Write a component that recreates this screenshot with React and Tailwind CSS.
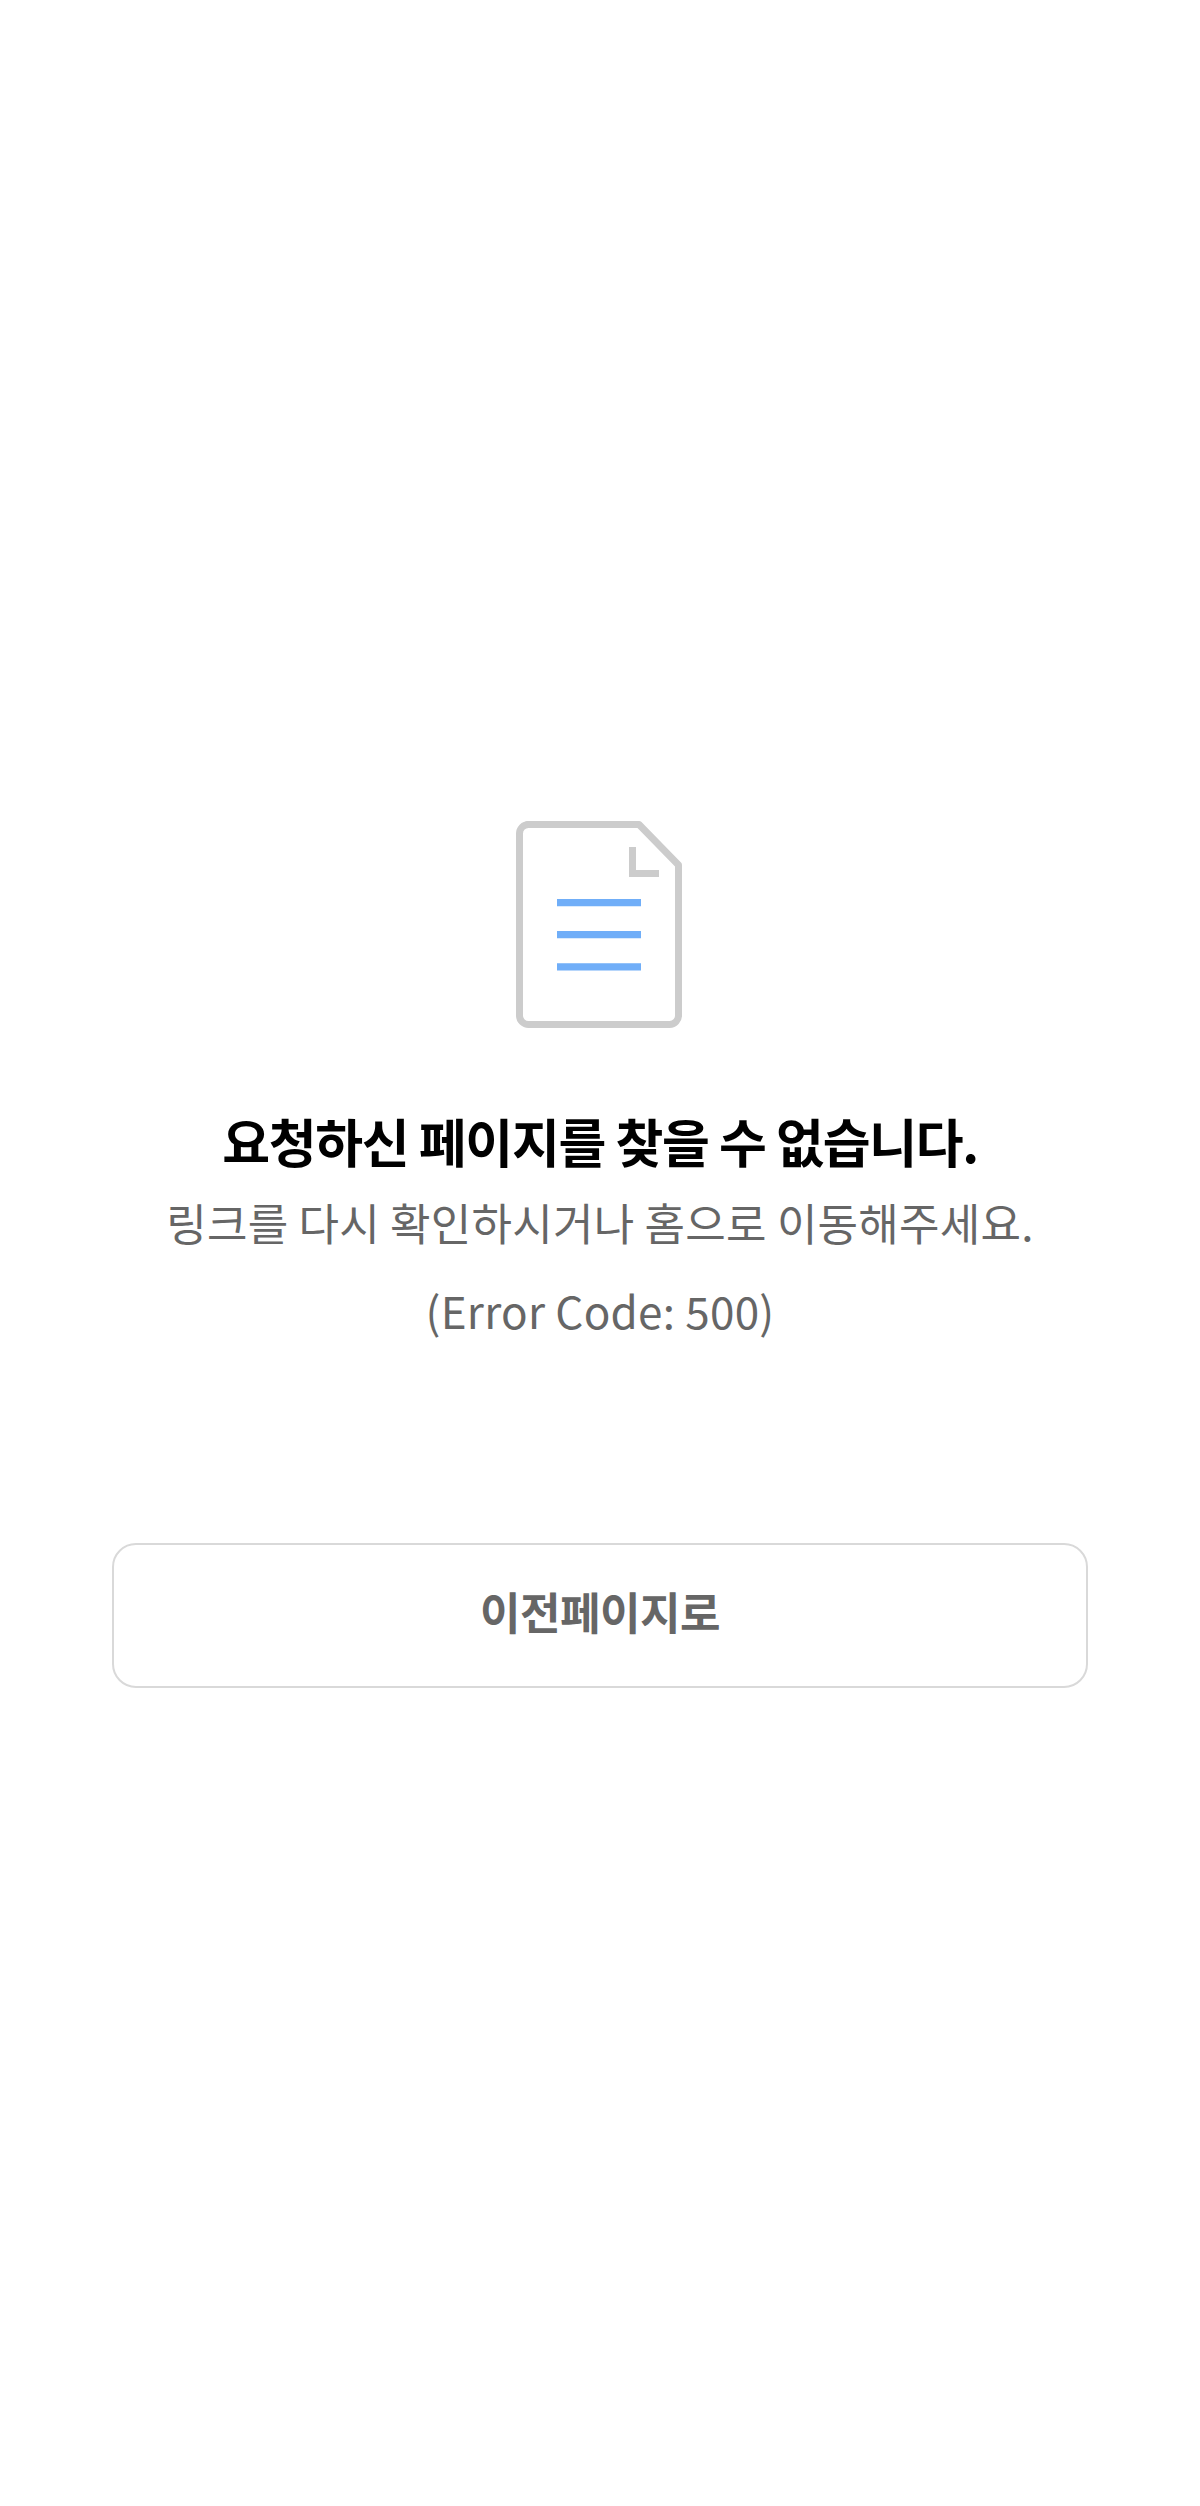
export default function App() {
  return (
    <div className="min-h-[2506px] bg-white flex flex-col items-center pt-[821px] px-[112px] font-['Noto_Sans_CJK_KR','Noto_Sans',sans-serif]">
      <svg width="166" height="207" viewBox="0 0 166 207" fill="none" className="-ml-[2px]">
        <path d="M11 3.500H123L162.500 44V194A9 9 0 0 1 153.500 203.500H12.500A9 9 0 0 1 3.500 194.500V12.500A9 9 0 0 1 12.500 3.500Z" stroke="#cccccc" strokeWidth="7" strokeLinejoin="round" />
        <path d="M116.500 26V52.500H143" stroke="#cccccc" strokeWidth="7" />
        <path d="M41 81.700H125M41 113.700H125M41 145.800H125" stroke="#70aef8" strokeWidth="7.300" />
      </svg>
      <h1 className="mt-[77px] text-[52px] leading-[72px] font-bold text-black tracking-[-1.3px]">요청하신 페이지를 찾을 수 없습니다.</h1>
      <p className="mt-[9px] text-[44px] leading-[72px] font-normal text-[#666666] tracking-[0.25px]">링크를 다시 확인하시거나 홈으로 이동해주세요.</p>
      <p className="mt-[16px] text-[44px] leading-[72px] font-normal text-[#666666] tracking-[0.25px]">(Error Code: 500)</p>
      <button className="mt-[197px] w-full h-[145px] border-2 border-[#d9d9d9] rounded-[24px] bg-white pb-[9px] text-[44px] font-bold text-[#666666] tracking-[-0.5px]">이전페이지로</button>
    </div>
  )
}
